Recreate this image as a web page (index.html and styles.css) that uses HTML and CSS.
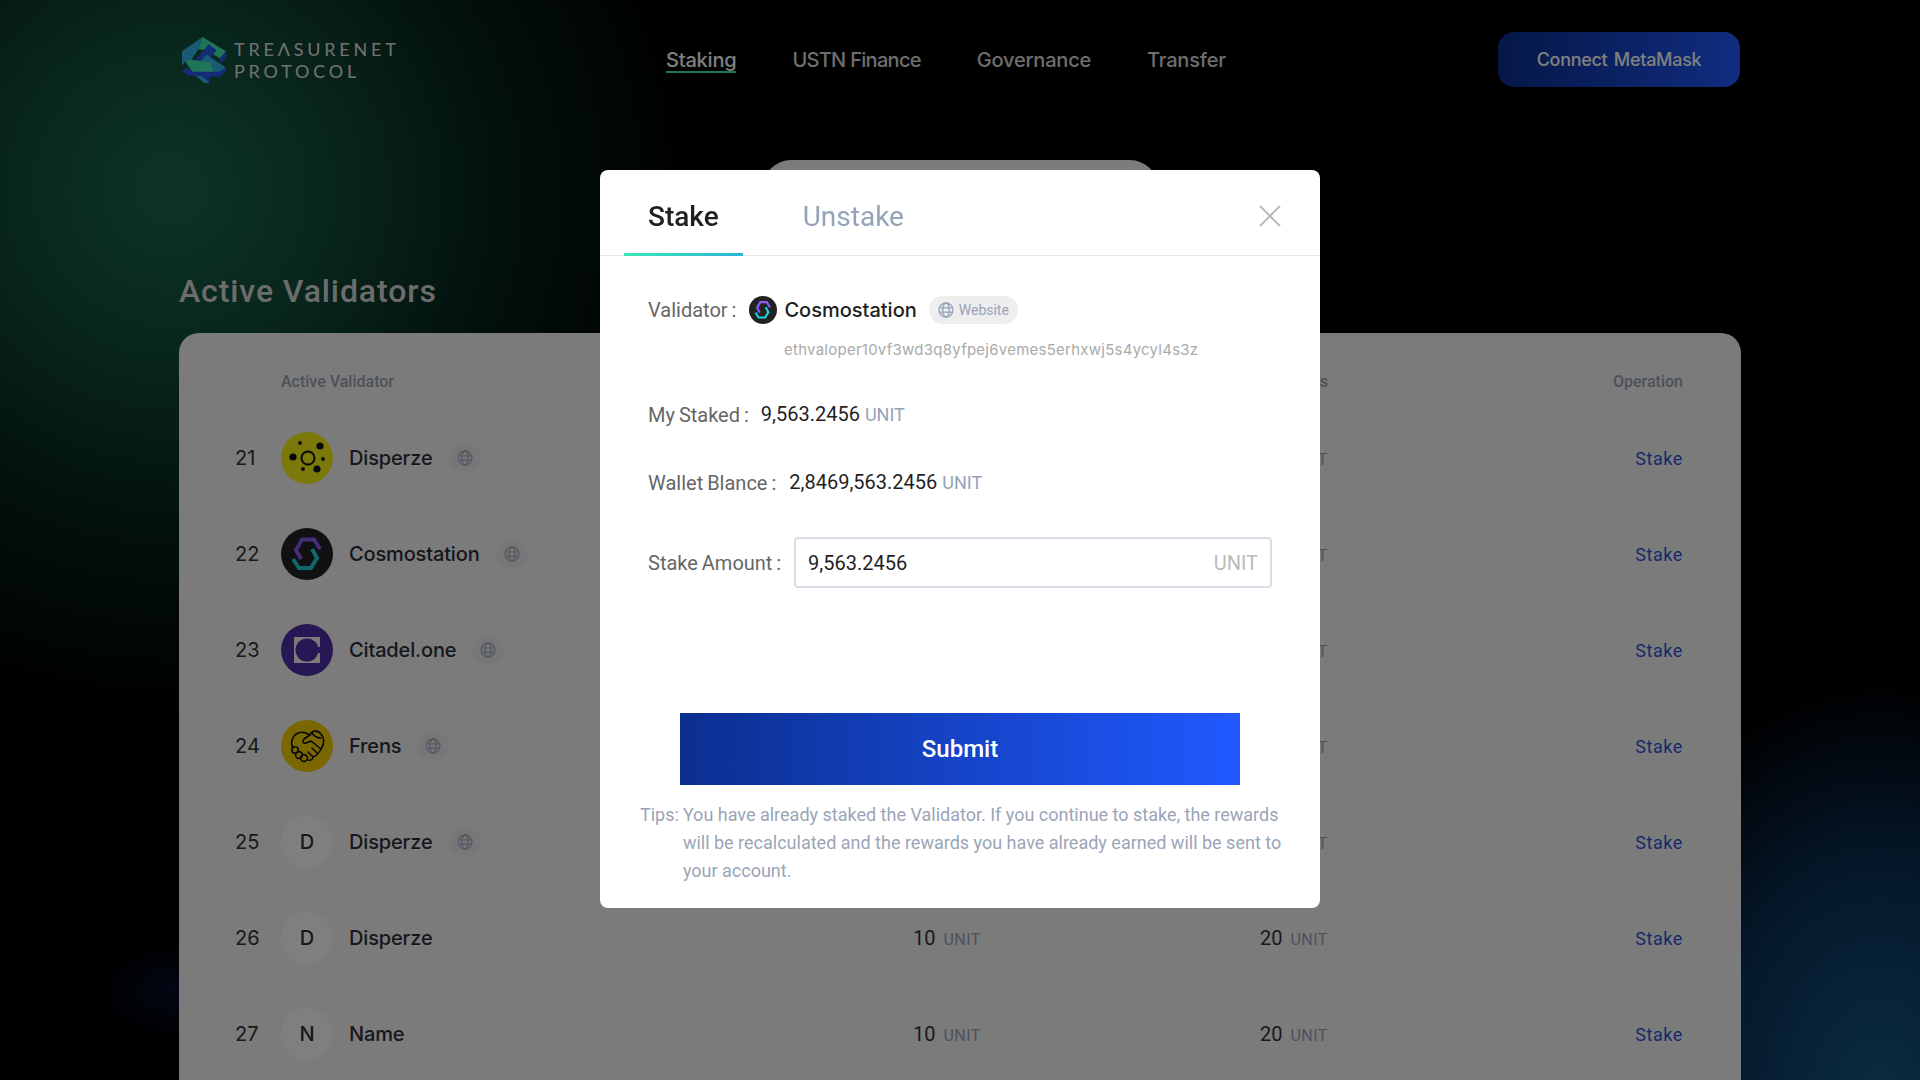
FILE: index.html
```html
<!DOCTYPE html>
<html lang="en">

<head>
  <meta charset="utf-8">
  <title>Treasurenet Protocol - Staking</title>
  <link rel="stylesheet" href="styles.css">
</head>

<body>
  <svg class="defs" width="0" height="0">
    <symbol id="globe" viewBox="0 0 16 16">
      <g fill="none" stroke="currentColor" stroke-width="1.3">
        <circle cx="8" cy="8" r="7"/>
        <ellipse cx="8" cy="8" rx="3.2" ry="7"/>
        <path d="M1.2 5.8h13.6M1.2 10.2h13.6"/>
      </g>
    </symbol>
    <symbol id="cosmo" viewBox="0 0 52 52">
      <circle cx="26" cy="26" r="26" fill="#222"/>
      <path d="M20 31 L15 22 L21 11.5 H33 L39 21" fill="none" stroke="#8a5cf0" stroke-width="4"/>
      <path d="M31 21 L36 30 L30 40 H18 L12 31" fill="none" stroke="#20d0d8" stroke-width="4"/>
    </symbol>
  </svg>

  <div class="page">
    <header class="topbar">
      <a class="logo">
        <svg class="logo-mark" viewBox="0 0 43 45" width="44" height="46">
          <polygon fill="#34b4e8" points="20,0 0,14 0,28 3,24 8,24 16,12"/>
          <polygon fill="#40e8b0" points="20,0 28,5 43,14 37,21 24,13 16,12"/>
          <polygon fill="#2858f0" points="26,7 34,13 22,26 12,24"/>
          <polygon fill="#2858f0" points="37,21 43,14 43,20 38,26"/>
          <polygon fill="#34b4e8" points="24,17 43,30 36,36 28,36 17,25"/>
          <polygon fill="#40e8b0" points="3,24 8,22 28,25 31,35 11,35"/>
          <polygon fill="#2858f0" points="0,33 5,30 11,34 36,34 43,30 43,33 37,39 26,39 27,45 22,45 13,38 6,38"/>
          <polygon fill="#34b4e8" points="13,38 20,39 27,45 22,45"/>
        </svg>
        <span class="logo-text">TREΛSURENET<br>PROTOCOL</span>
      </a>
      <nav class="nav">
        <a class="nav-link active">Staking</a>
        <a class="nav-link caps">USTN Finance</a>
        <a class="nav-link">Governance</a>
        <a class="nav-link">Transfer</a>
      </nav>
      <button class="connect-btn">Connect MetaMask</button>
    </header>

    <div class="switcher"><span class="switcher-on"></span></div>

    <h2 class="page-title">Active Validators</h2>

    <section class="card">
      <div class="row head">
        <span></span>
        <span>Active Validator</span>
        <span>Total Staked</span>
        <span class="rewards">Rewards</span>
        <span class="op">Operation</span>
      </div>

      <div class="row">
        <span class="num">21</span>
        <div class="who">
          <span class="avatar">
            <svg viewBox="0 0 52 52" width="52" height="52">
              <circle cx="26" cy="26" r="26" fill="#f4f214"/>
              <circle cx="27" cy="26" r="6.5" fill="none" stroke="#111" stroke-width="2"/>
              <circle cx="12" cy="25" r="3.6" fill="#111"/>
              <circle cx="39" cy="14" r="3.6" fill="#111"/>
              <circle cx="36" cy="37" r="3.6" fill="#111"/>
              <circle cx="19" cy="11" r="1.9" fill="#111"/>
              <circle cx="42" cy="27" r="1.9" fill="#111"/>
              <circle cx="22" cy="37" r="1.9" fill="#111"/>
            </svg>
          </span>
          <span class="name">Disperze</span>
          <span class="link"><svg width="16" height="16"><use href="#globe"/></svg></span>
        </div>
        <span class="val">10 <small>UNIT</small></span>
        <span class="val">20 <small>UNIT</small></span>
        <a class="op action">Stake</a>
      </div>

      <div class="row">
        <span class="num">22</span>
        <div class="who">
          <span class="avatar"><svg width="52" height="52"><use href="#cosmo"/></svg></span>
          <span class="name">Cosmostation</span>
          <span class="link"><svg width="16" height="16"><use href="#globe"/></svg></span>
        </div>
        <span class="val">10 <small>UNIT</small></span>
        <span class="val">20 <small>UNIT</small></span>
        <a class="op action">Stake</a>
      </div>

      <div class="row">
        <span class="num">23</span>
        <div class="who">
          <span class="avatar">
            <svg viewBox="0 0 52 52" width="52" height="52">
              <circle cx="26" cy="26" r="26" fill="#4f2fa8"/>
              <rect x="13" y="13" width="26" height="26" fill="#f7f7f7"/>
              <circle cx="26" cy="26" r="11.5" fill="#4f2fa8"/>
              <rect x="34" y="23" width="6" height="6" fill="#4f2fa8"/>
            </svg>
          </span>
          <span class="name">Citadel.one</span>
          <span class="link"><svg width="16" height="16"><use href="#globe"/></svg></span>
        </div>
        <span class="val">10 <small>UNIT</small></span>
        <span class="val">20 <small>UNIT</small></span>
        <a class="op action">Stake</a>
      </div>

      <div class="row">
        <span class="num">24</span>
        <div class="who">
          <span class="avatar">
            <svg viewBox="0 0 52 52" width="52" height="52">
              <circle cx="26" cy="26" r="26" fill="#f5cf00"/>
              <g fill="none" stroke="#111" stroke-width="1.6" stroke-linejoin="round" stroke-linecap="round">
                <path d="M12 28C9 23 11 16 17 13C22 11 26 13 29 15L23 19C21 21 22 24 25 23L30 21L40 29C38 33 35 36 32 37"/>
                <path d="M29 15C31 10 37 10 40 14C44 18 43 25 40 29"/>
                <path d="M31 13C33 16 36 18 40 18"/>
                <circle cx="14" cy="30" r="3.2"/>
                <circle cx="18" cy="35" r="3.4"/>
                <circle cx="23" cy="38" r="3.4"/>
                <path d="M27 40C30 41 32 39 32 37L27 32M36 33L31 28"/>
              </g>
            </svg>
          </span>
          <span class="name">Frens</span>
          <span class="link"><svg width="16" height="16"><use href="#globe"/></svg></span>
        </div>
        <span class="val">10 <small>UNIT</small></span>
        <span class="val">20 <small>UNIT</small></span>
        <a class="op action">Stake</a>
      </div>

      <div class="row">
        <span class="num">25</span>
        <div class="who">
          <span class="avatar letter">D</span>
          <span class="name">Disperze</span>
          <span class="link"><svg width="16" height="16"><use href="#globe"/></svg></span>
        </div>
        <span class="val">10 <small>UNIT</small></span>
        <span class="val">20 <small>UNIT</small></span>
        <a class="op action">Stake</a>
      </div>

      <div class="row">
        <span class="num">26</span>
        <div class="who">
          <span class="avatar letter">D</span>
          <span class="name">Disperze</span>
        </div>
        <span class="val">10 <small>UNIT</small></span>
        <span class="val">20 <small>UNIT</small></span>
        <a class="op action">Stake</a>
      </div>

      <div class="row">
        <span class="num">27</span>
        <div class="who">
          <span class="avatar letter">N</span>
          <span class="name">Name</span>
        </div>
        <span class="val">10 <small>UNIT</small></span>
        <span class="val">20 <small>UNIT</small></span>
        <a class="op action">Stake</a>
      </div>
    </section>
  </div>

  <div class="overlay">
    <div class="modal">
      <div class="tabs">
        <a class="tab active">Stake</a>
        <a class="tab">Unstake</a>
        <svg class="close" viewBox="0 0 22 22" width="22" height="22">
          <path d="M1 1L21 21M21 1L1 21" stroke="#bbb" stroke-width="2" fill="none"/>
        </svg>
      </div>

      <div class="modal-body">
        <div class="field validator">
          <label>Validator :</label>
          <svg width="28" height="28"><use href="#cosmo"/></svg>
          <span class="v-name">Cosmostation</span>
          <span class="website">
            <svg width="16" height="16"><use href="#globe"/></svg>
            Website
          </span>
        </div>
        <p class="address">ethvaloper10vf3wd3q8yfpej6vemes5erhxwj5s4ycyl4s3z</p>

        <div class="field staked">
          <label>My Staked :</label>
          <span class="amount">9,563.2456 <small>UNIT</small></span>
        </div>
        <div class="field wallet">
          <label>Wallet Blance :</label>
          <span class="amount">2,8469,563.2456 <small>UNIT</small></span>
        </div>
        <div class="field stake-amount">
          <label>Stake Amount :</label>
          <div class="input-box">
            <span>9,563.2456</span>
            <span class="suffix">UNIT</span>
          </div>
        </div>

        <button class="submit">Submit</button>
      </div>

      <div class="tips">
        <span>Tips:</span>
        <p>You have already staked the Validator. If you continue to stake, the rewards will be recalculated and the rewards you have already earned will be sent to your account.</p>
      </div>
    </div>
  </div>
</body>

</html>
```

FILE: styles.css
```css
html {
  height: 100%;
}

body {
  height: 100%;
  margin: 0;
  overflow: hidden;
  font-family: 'Roboto', 'Liberation Sans', sans-serif;
  background-color: #000;
  background-image:
    radial-gradient(circle at 170px 190px, #1a6a4f 0, #114a37 170px, #05201a 340px, rgba(0, 0, 0, 0) 530px),
    radial-gradient(ellipse 300px 420px at 1880px 1100px, #155a84 0, #0b3056 55%, rgba(0, 0, 0, 0) 100%),
    radial-gradient(ellipse 90px 50px at 179px 990px, #040e28 0, rgba(0, 0, 0, 0) 100%);
  background-repeat: no-repeat;
}

.defs {
  display: block;
  height: 0;
}

.page {
  width: 1562px;
  margin: 0 auto;
}

a {
  cursor: pointer;
}

/* top bar */
.topbar {
  display: flex;
  justify-content: space-between;
  align-items: center;
  height: 120px;
}

.logo {
  display: flex;
  align-items: center;
  gap: 8px;
  margin-left: 3px;
}

.logo-mark {
  display: block;
}

.logo-text {
  font-family: 'Lato', sans-serif;
  font-size: 18px;
  line-height: 22px;
  letter-spacing: 3.8px;
  color: #e4e4e4;
}

.nav {
  display: flex;
  gap: 56px;
  margin-right: 6px;
}

.nav-link {
  font-family: 'Inter', sans-serif;
  font-size: 20px;
  line-height: 22px;
  font-weight: 500;
  letter-spacing: -0.2px;
  color: #ddd;
}

.nav-link.caps {
  letter-spacing: -0.7px;
}

.nav-link.active {
  color: #fff;
  border-bottom: 2px solid #3be8b5;
  margin-bottom: -2px;
}

.connect-btn {
  width: 242px;
  height: 55px;
  margin: -1px 1px 0 0;
  border: 0;
  border-radius: 16px;
  background: linear-gradient(90deg, #0b2f8f, #2059ff);
  color: #fff;
  font-family: 'Inter', sans-serif;
  font-size: 18px;
  font-weight: 500;
  letter-spacing: -0.3px;
  word-spacing: 2px;
}

/* stake / mine switch, mostly hidden by the dialog */
.switcher {
  width: 395px;
  height: 56px;
  margin: 40px auto 0;
  border-radius: 28px;
  background: #f7f7f7;
}

.page-title {
  margin: 56px 0 0;
  font-size: 32px;
  line-height: 38px;
  font-weight: 500;
  letter-spacing: 0.9px;
  color: #d8d8d8;
}

/* table */
.card {
  margin-top: 23px;
  height: 900px;
  border-radius: 20px;
  background: #f7f7f7;
}

.row {
  display: grid;
  grid-template-columns: 44px 632px 347px 1fr auto;
  align-items: center;
  height: 96px;
  padding: 0 58px;
}

.row.head {
  height: 24px;
  padding-top: 37px;
  padding-bottom: 16px;
  font-size: 16px;
  font-weight: 500;
  line-height: 24px;
  color: #9aa3b2;
}

.rewards {
  padding-left: 6px;
}

.num {
  margin-left: -2px;
  font-family: 'Inter', sans-serif;
  font-size: 20px;
  color: #333;
}

.who {
  display: flex;
  align-items: center;
}

.avatar {
  width: 52px;
  height: 52px;
  border-radius: 50%;
  margin-right: 16px;
}

.avatar svg {
  display: block;
}

.avatar.letter {
  display: flex;
  justify-content: center;
  align-items: center;
  background: #fff;
  font-family: 'Inter', sans-serif;
  font-size: 20px;
  font-weight: 500;
  color: #2a2e3a;
}

.name {
  font-family: 'Inter', sans-serif;
  font-size: 20px;
  font-weight: 500;
  letter-spacing: -0.15px;
  color: #2a2e3a;
}

.link {
  display: flex;
  justify-content: center;
  align-items: center;
  width: 32px;
  height: 28px;
  margin-left: 16px;
  border-radius: 14px;
  background: #eee;
  color: #aab4c6;
}

.val {
  font-size: 20px;
  color: #333;
}

.val small {
  font-size: 16px;
  letter-spacing: 0.5px;
  color: #9aa5b8;
  margin-left: 3px;
}

.op {
  text-align: right;
}

.action {
  font-size: 18px;
  letter-spacing: 0.6px;
  color: #2a56d8;
}

/* dialog */
.overlay {
  position: fixed;
  top: 0;
  right: 0;
  bottom: 0;
  left: 0;
  display: flex;
  justify-content: center;
  align-items: flex-start;
  padding-top: 170px;
  background: rgba(0, 0, 0, 0.5);
}

.modal {
  width: 720px;
  height: 738px;
  border-radius: 8px;
  background: #fff;
}

.tabs {
  position: relative;
  display: flex;
  align-items: center;
  gap: 36px;
  height: 85px;
  padding-left: 24px;
  border-bottom: 1px solid #e5e7eb;
}

.tab {
  position: relative;
  display: block;
  padding: 0 24px;
  font-size: 28px;
  line-height: 93px;
  height: 86px;
  margin-bottom: -1px;
  color: #94a3b8;
}

.tab.active {
  font-weight: 500;
  color: #1f1f1f;
}

.tab.active::after {
  content: "";
  position: absolute;
  left: 0;
  right: 0;
  bottom: 0;
  height: 3px;
  background: linear-gradient(90deg, #3be8b5, #2ab3d8);
}

.close {
  margin: 7px 39px 0 auto;
}

.modal-body {
  padding: 40px 48px 0;
}

.field {
  display: flex;
  align-items: center;
  gap: 13px;
  font-size: 20px;
  line-height: 28px;
}

.field label {
  flex: none;
  white-space: nowrap;
  word-spacing: -1px;
  color: #666;
}

.v-name {
  margin-left: -6px;
  font-family: 'Inter', sans-serif;
  font-weight: 500;
  color: #1f1f1f;
}

.website {
  display: flex;
  align-items: center;
  gap: 5px;
  height: 28px;
  padding: 0 9px;
  border-radius: 14px;
  background: #eee;
  font-size: 14px;
  color: #94a3b8;
  margin-left: -1px;
}

.address {
  margin: 14px 0 0 136px;
  font-family: 'Inter', sans-serif;
  font-size: 15px;
  line-height: 24px;
  letter-spacing: 0.25px;
  color: #aaa;
}

.staked {
  margin-top: 38px;
}

.wallet {
  margin-top: 39px;
}

.staked .amount {
  margin-left: -1px;
}

.amount {
  color: #1f1f1f;
}

.amount small {
  font-size: 18px;
  color: #94a3b8;
}

.stake-amount {
  margin-top: 40px;
}

.stake-amount label {
  width: 133px;
}

.input-box {
  display: flex;
  justify-content: space-between;
  align-items: center;
  box-sizing: border-box;
  width: 478px;
  height: 51px;
  padding: 0 12px;
  border: 2px solid #d8dee6;
  border-radius: 4px;
  color: #1f1f1f;
}

.suffix {
  color: #bbb;
}

.submit {
  display: block;
  width: 560px;
  height: 72px;
  margin: 125px 0 0 32px;
  border: 0;
  background: linear-gradient(90deg, #0b2f8f, #2059ff);
  color: #fff;
  font-family: 'Roboto', sans-serif;
  font-size: 24px;
  font-weight: 500;
}

.tips {
  display: flex;
  gap: 4px;
  margin: 16px 0 0 40px;
  width: 650px;
  font-size: 18px;
  line-height: 28px;
  color: #9aa5b8;
}

.tips p {
  margin: 0;
}
```
